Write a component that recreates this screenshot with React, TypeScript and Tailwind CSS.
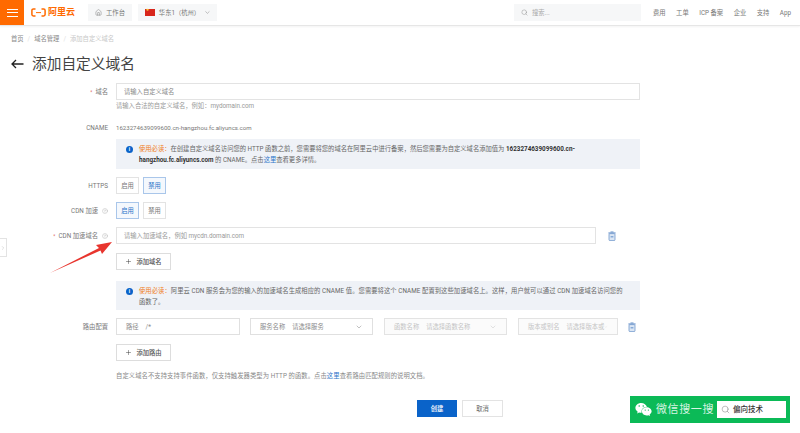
import type { ReactNode } from 'react';
import { ChevronDown, ChevronRight, CircleHelp, Home, Plus, Search } from 'lucide-react';
import { FaWeixin } from 'react-icons/fa';

const font = { fontFamily: '"Roboto", "Noto Sans CJK SC", sans-serif' };

function TrashIcon() {
  return (
    <svg width="8" height="10" viewBox="0 0 8 10" className="shrink-0">
      <rect x="2.5" y="0.4" width="3" height="1.2" fill="#7fa3d1" />
      <rect x="0.4" y="1.4" width="7.2" height="1.2" fill="#6f97cc" />
      <rect x="1" y="2.6" width="6" height="7" rx="1" fill="#dbe6f4" stroke="#6f97cc" strokeWidth="0.8" />
      <rect x="2.6" y="5.4" width="2.8" height="0.9" fill="#4f83c4" />
    </svg>
  );
}

function InfoDot() {
  return (
    <span className="flex h-[7px] w-[7px] shrink-0 items-center justify-center rounded-full bg-[#0a63c9] text-[5px] font-bold leading-none text-white">
      i
    </span>
  );
}

function Row({ label, required, help, children, className }: {
  label?: string;
  required?: boolean;
  help?: boolean;
  children: ReactNode;
  className?: string;
}) {
  return (
    <div className={`flex items-center ${className ?? ''}`}>
      <div className="flex w-[108px] shrink-0 items-center justify-end gap-[3px] text-[6.3px] text-[#777]">
        {required && <span className="text-[5px] text-[#e0685f]">*</span>}
        <span>{label}</span>
        {help && <CircleHelp size={6} strokeWidth={1.3} className="ml-[1px] text-[#999]" />}
      </div>
      <div className="ml-2 min-w-0 flex-1">{children}</div>
    </div>
  );
}

function Toggle({ on, children }: { on?: boolean; children: ReactNode }) {
  return (
    <button
      className={`flex h-[17px] w-[23px] items-center justify-center border text-[6.3px] ${
        on ? 'border-[#a9c6ea] bg-[#f4f8fd] text-[#2b74c8]' : 'border-[#e3e3e3] bg-white text-[#777]'
      }`}
    >
      {children}
    </button>
  );
}

function AddButton({ children }: { children: ReactNode }) {
  return (
    <button className="flex h-[17px] w-[55px] items-center justify-center gap-[4px] border border-[#ddd] bg-white text-[6.3px] font-medium text-[#555]">
      <Plus size={7} strokeWidth={1.6} className="text-[#333]" />
      {children}
    </button>
  );
}

function RouteSelect({ label, hint, disabled, className }: {
  label: string;
  hint: string;
  disabled?: boolean;
  className: string;
}) {
  return (
    <div
      className={`flex h-[17px] items-center justify-between border px-[9px] text-[6.3px] ${className} ${
        disabled ? 'border-[#e3e3e3] bg-[#fbfbfb] text-[#c4c4c4]' : 'border-[#e0e0e0] bg-white text-[#8a8a8a]'
      }`}
    >
      <span className="flex gap-[7px] whitespace-nowrap">
        <span>{label}</span>
        <span>{hint}</span>
      </span>
      <ChevronDown size={8} strokeWidth={1.2} className={disabled ? 'text-[#bbb]' : 'text-[#666]'} />
    </div>
  );
}

function TopBar() {
  return (
    <header className="flex h-[26px] items-center border-b border-[#e6e6e6] bg-white shadow-[0_1px_2px_rgba(0,0,0,0.05)]">
      <div className="flex h-full w-[24px] flex-col items-center justify-center gap-[2.5px] bg-[#ff6a00]">
        <span className="h-[1px] w-[11px] bg-white" />
        <span className="h-[1px] w-[11px] bg-white" />
        <span className="h-[1px] w-[11px] bg-white" />
      </div>
      <div className="ml-[7px] flex items-center gap-[2px]">
        <svg width="15" height="9" viewBox="0 0 15 9" fill="none" stroke="#ff6a00" strokeWidth="1.5">
          <path d="M4.5 1H2.4C1.5 1 .9 1.6.9 2.4v4.2c0 .8.6 1.4 1.5 1.4h2.1" />
          <path d="M10.5 1h2.1c.9 0 1.5.6 1.5 1.4v4.2c0 .8-.6 1.4-1.5 1.4h-2.1" />
          <path d="M5 4.6h5" strokeWidth="1" />
        </svg>
        <span className="text-[9px] font-bold leading-none text-[#ff6a00]">阿里云</span>
      </div>
      <div className="ml-[13px] flex h-[17px] w-[44px] items-center justify-center gap-[4px] bg-[#f6f7f8] text-[6.3px] text-[#777]">
        <Home size={7} strokeWidth={1.4} className="text-[#666]" />
        工作台
      </div>
      <div className="ml-[6px] flex h-[17px] w-[79px] items-center gap-[4px] bg-[#f6f7f8] pl-[7px] text-[6.3px] text-[#777]">
        <span className="flex h-[7px] w-[10px] items-start bg-[#d8261c] pl-[1px] text-[3px] leading-none text-[#ffd83d]">★</span>
        <span className="whitespace-nowrap">华东1（杭州）</span>
        <ChevronDown size={7} strokeWidth={1.4} className="ml-auto mr-[6px] text-[#666]" />
      </div>
      <div className="ml-auto flex h-[17px] w-[127px] items-center gap-[4px] bg-[#f6f7f8] pl-[7px] text-[6.3px] text-[#aaa]">
        <Search size={7} strokeWidth={1.3} className="text-[#777]" />
        搜索...
      </div>
      <nav className="ml-[12px] mr-[9px] flex gap-[10.5px] whitespace-nowrap text-[6.3px] text-[#777]">
        <span>费用</span>
        <span>工单</span>
        <span>ICP 备案</span>
        <span>企业</span>
        <span>支持</span>
        <span>App</span>
      </nav>
    </header>
  );
}

export default function App() {
  return (
    <div style={font} className="relative h-[433px] w-[800px] overflow-hidden bg-white text-[6.3px] leading-[10px]">
      <TopBar />

      <div className="ml-[11px] mt-[8px] flex h-[10px] items-center gap-[4px] text-[6.3px] text-[#888]">
        <span>首页</span>
        <span className="text-[#ddd]">/</span>
        <span>域名管理</span>
        <span className="text-[#ddd]">/</span>
        <span className="text-[#c8c8c8]">添加自定义域名</span>
      </div>

      <div className="ml-[11px] mt-[10px] flex h-[20px] items-center gap-[8px]">
        <svg width="13" height="10" viewBox="0 0 13 10" fill="none" stroke="#222" strokeWidth="1.3">
          <path d="M12.5 5H1M5 1 1 5l4 4" />
        </svg>
        <h1 className="text-[14.7px] font-normal leading-none text-[#444]">添加自定义域名</h1>
      </div>

      <main className="mt-[9px] w-[640px]">
        <Row label="域名" required>
          <input
            readOnly
            placeholder="请输入自定义域名"
            className="block h-[17px] w-full border border-[#e3e3e3] px-[7px] text-[6.3px] outline-none placeholder:text-[#888]"
          />
        </Row>
        <p className="ml-[116px] mt-[3px] h-[7px] text-[6.3px] leading-[7px] text-[#999]">
          请输入合法的自定义域名，例如：mydomain.com
        </p>

        <Row label="CNAME" className="mt-[14px] h-[8px]">
          <span className="block text-[6.1px] text-[#777]">1623274639099600.cn-hangzhou.fc.aliyuncs.com</span>
        </Row>

        <div className="ml-[116px] mt-[7px] flex h-[30px] items-start gap-[6px] bg-[#eff2f7] pl-[10px] pt-[5px] text-[6.3px] leading-[10.5px] text-[#666]">
          <span className="mt-[2px]"><InfoDot /></span>
          <p className="whitespace-nowrap">
            <span className="text-[#ef7d22]">使用必读：</span>
            在创建自定义域名访问您的 HTTP 函数之前，您需要将您的域名在阿里云中进行备案，然后您需要为自定义域名添加值为{' '}
            <b className="font-bold text-[#333]">1623274639099600.cn-</b>
            <br />
            <b className="font-bold text-[#333]">hangzhou.fc.aliyuncs.com</b> 的 CNAME。点击
            <span className="text-[#2b74c8]">这里</span>查看更多详情。
          </p>
        </div>

        <Row label="HTTPS" className="mt-[8px]">
          <div className="flex gap-[4px]">
            <Toggle>启用</Toggle>
            <Toggle on>禁用</Toggle>
          </div>
        </Row>

        <Row label="CDN 加速" help className="mt-[8px]">
          <div className="flex gap-[4px]">
            <Toggle on>启用</Toggle>
            <Toggle>禁用</Toggle>
          </div>
        </Row>

        <Row label="CDN 加速域名" required help className="mt-[8px]">
          <div className="flex items-center">
            <input
              readOnly
              placeholder="请输入加速域名，例如 mycdn.domain.com"
              className="block h-[17px] w-[480px] border border-[#e3e3e3] px-[7px] text-[6.3px] outline-none placeholder:text-[#999]"
            />
            <span className="ml-[12px]"><TrashIcon /></span>
          </div>
        </Row>

        <div className="ml-[116px] mt-[9px]">
          <AddButton>添加域名</AddButton>
        </div>

        <div className="ml-[116px] mt-[11px] flex h-[29px] items-start gap-[6px] bg-[#eff2f7] pl-[10px] pt-[5px] text-[6.3px] leading-[10.5px] text-[#666]">
          <span className="mt-[2px]"><InfoDot /></span>
          <p className="whitespace-nowrap tracking-[0.06px]">
            <span className="text-[#ef7d22]">使用必读：</span>
            阿里云 CDN 服务会为您的输入的加速域名生成相应的 CNAME 值。您需要将这个 CNAME 配置到这些加速域名上。这样，用户就可以通过 CDN 加速域名访问您的
            <br />
            函数了。
          </p>
        </div>

        <div className="mt-[8px] flex items-center">
          <div className="w-[108px] shrink-0 text-right text-[6.3px] text-[#777]">路由配置</div>
          <div className="ml-2 flex shrink-0 items-center">
            <div className="flex h-[17px] w-[124px] items-center gap-[7px] border border-[#e0e0e0] px-[9px] text-[6.3px] text-[#8a8a8a]">
              <span>路径</span>
              <span>/*</span>
            </div>
            <RouteSelect label="服务名称" hint="请选择服务" className="ml-[10px] w-[123px]" />
            <RouteSelect label="函数名称" hint="请选择函数名称" disabled className="ml-[11px] w-[123px]" />
            <RouteSelect label="版本或别名" hint="请选择版本或" disabled className="ml-[11px] w-[100px]" />
            <span className="ml-[10px]"><TrashIcon /></span>
          </div>
        </div>

        <div className="ml-[116px] mt-[9px]">
          <AddButton>添加路由</AddButton>
        </div>

        <p className="ml-[116px] mt-[11px] h-[8px] whitespace-nowrap text-[6.3px] leading-[8px] tracking-[0.08px] text-[#888]">
          自定义域名不支持支持事件函数，仅支持触发器类型为 HTTP 的函数。点击
          <span className="text-[#2b74c8]">这里</span>查看路由匹配规则的说明文档。
        </p>

        <div className="ml-[417px] mt-[20px] flex gap-[5px]">
          <button className="h-[17px] w-[40px] bg-[#0a63c9] text-[6.3px] font-medium text-white">创建</button>
          <button className="h-[17px] w-[41px] border border-[#e3e3e3] bg-white text-[6.3px] text-[#666]">取消</button>
        </div>
      </main>

      {/* sidebar handle */}
      <div className="absolute left-0 top-[238px] flex h-[19px] w-[7px] items-center justify-center border border-l-0 border-[#e3e3e3] bg-white">
        <ChevronRight size={6} strokeWidth={1.2} className="text-[#999]" />
      </div>

      {/* red annotation arrow */}
      <svg width="64" height="36" viewBox="0 0 64 36" className="absolute left-[49px] top-[239px]">
        <path d="M1 34 L50 9 L47 6 L63 3 L53 15 L51.5 11.5 Z" fill="#e8352e" />
      </svg>

      {/* wechat search badge */}
      <div className="absolute left-[630px] top-[396px] flex h-[27px] w-[160px] items-center bg-[#0bba57] pl-[5px]">
        <FaWeixin size={17} className="text-white" />
        <span className="ml-[4px] whitespace-nowrap text-[11px] leading-none tracking-[0.6px] text-[#d8f5e3]">微信搜一搜</span>
        <div className="ml-[3px] flex h-[17px] w-[69px] items-center gap-[3px] bg-white pl-[4px] text-[7.5px] font-medium text-[#333]">
          <Search size={9} strokeWidth={1} className="text-[#555]" />
          偏向技术
        </div>
      </div>
    </div>
  );
}
